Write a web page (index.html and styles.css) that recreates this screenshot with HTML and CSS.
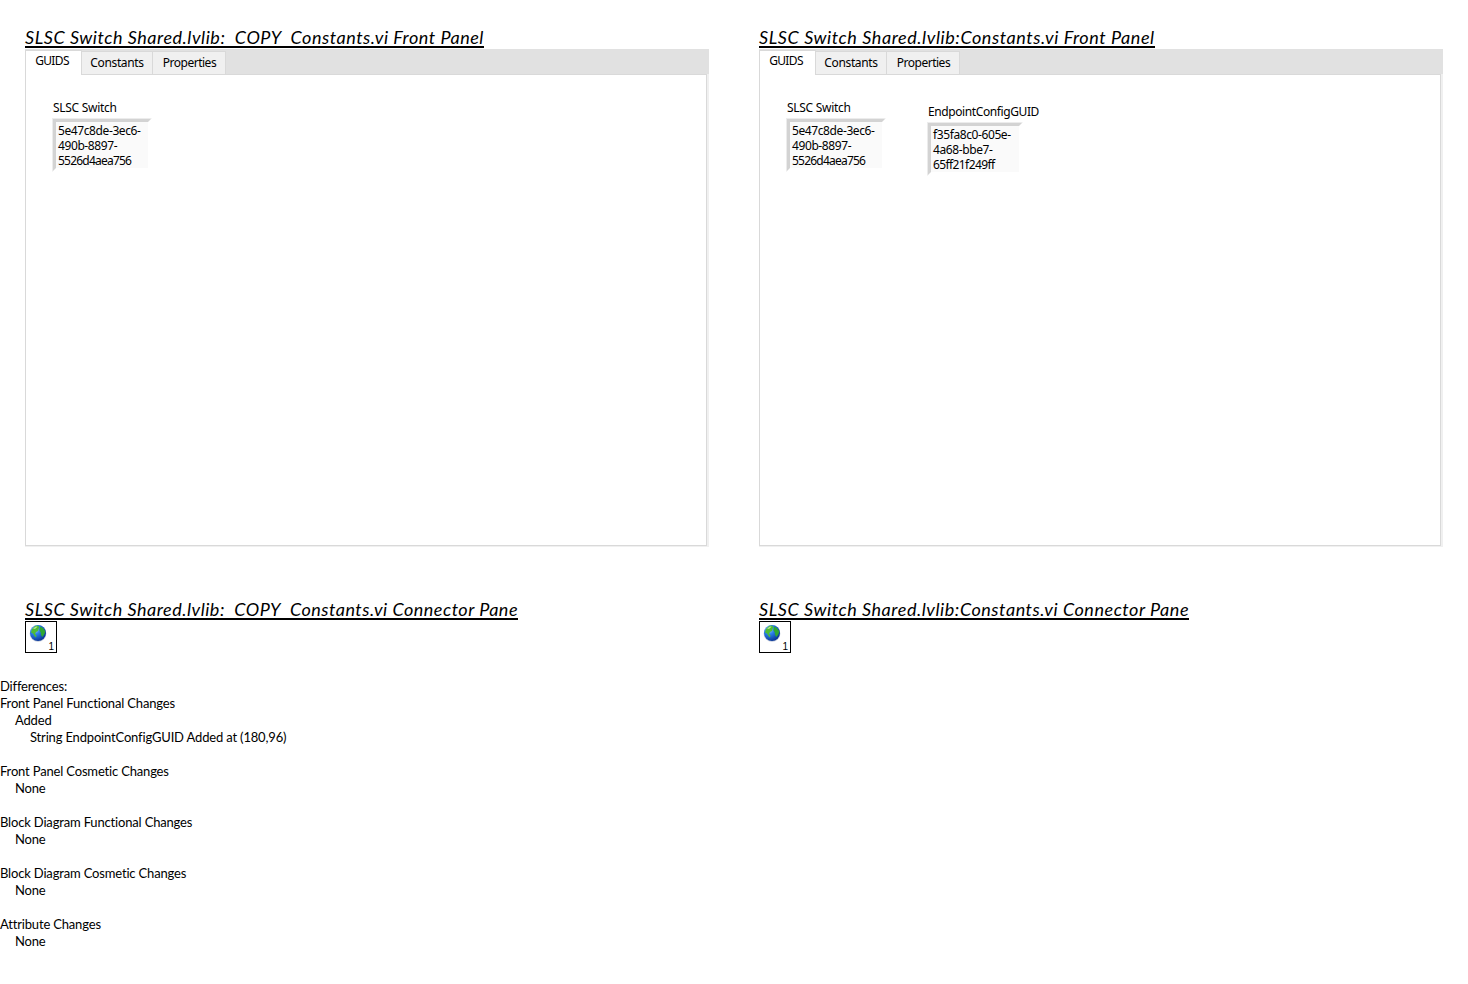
FILE: index.html
```
<!DOCTYPE html>
<html lang="en">
<head>
<meta charset="utf-8">
<title>VI Comparison Report</title>
<link rel="stylesheet" href="styles.css">
</head>
<body>
<svg class="defs" width="0" height="0">
  <defs>
    <radialGradient id="sea" cx="32%" cy="28%" r="75%">
      <stop offset="0" stop-color="#a5d2fa"/><stop offset=".4" stop-color="#2a80ea"/><stop offset="1" stop-color="#0a3596"/>
    </radialGradient>
    <symbol id="globe" viewBox="0 0 18 18">
      <circle cx="9" cy="9.6" r="8.4" fill="#abb7cb" opacity=".6"/>
      <circle cx="9" cy="9" r="8" fill="url(#sea)"/>
      <path d="M3 5 L6 2 L9 1.5 L10.5 3 L9.5 5 L9 7 L7 8 L6 10 L7.5 11.5 L7 13.5 L5.5 12 L4 9.5 L2 8.5Z" fill="#4fbc35"/>
      <path d="M11 2.5 L14 4 L16.3 7.5 L15.5 10 L13.5 13 L12 11 L11.8 8.5 L10.5 6.5Z" fill="#2ea832"/>
      <path d="M4 4.5 L7 2.5 L8.5 2.8 L6 5Z" fill="#b5e994"/>
    </symbol>
  </defs>
</svg>
<main class="report">
  <div class="columns">
    <section class="column">
      <h2 class="title title-a">SLSC Switch Shared.lvlib:&nbsp; COPY&nbsp; Constants.vi Front Panel</h2>
      <div class="panel">
        <div class="tabs"><span class="tab active">GUIDS</span><span class="tab constants">Constants</span><span class="tab properties">Properties</span></div>
        <div class="page">
          <div class="field"><span class="label">SLSC Switch</span><div class="frame"><div class="value">5e47c8de-3ec6-<br>490b-8897-<br><span class="tail">5526d4aea756</span></div></div></div>
        </div>
      </div>
      <h2 class="title title-b">SLSC Switch Shared.lvlib:&nbsp; COPY&nbsp; Constants.vi Connector Pane</h2>
      <div class="connector"><svg class="globe"><use href="#globe"/></svg><span class="index">1</span></div>
    </section>
    <section class="column">
      <h2 class="title title-c">SLSC Switch Shared.lvlib:Constants.vi Front Panel</h2>
      <div class="panel">
        <div class="tabs"><span class="tab active">GUIDS</span><span class="tab constants">Constants</span><span class="tab properties">Properties</span></div>
        <div class="page">
          <div class="field"><span class="label">SLSC Switch</span><div class="frame"><div class="value">5e47c8de-3ec6-<br>490b-8897-<br><span class="tail">5526d4aea756</span></div></div></div>
          <div class="field endpoint"><span class="label">EndpointConfigGUID</span><div class="frame"><div class="value">f35fa8c0-605e-<br>4a68-bbe7-<br><span class="tail">65ff21f249ff</span></div></div></div>
        </div>
      </div>
      <h2 class="title title-d">SLSC Switch Shared.lvlib:Constants.vi Connector Pane</h2>
      <div class="connector"><svg class="globe"><use href="#globe"/></svg><span class="index">1</span></div>
    </section>
  </div>
  <section class="differences">
    <p>Differences:</p>
    <div class="group"><p>Front Panel Functional Changes</p><p class="in1">Added</p><p class="in2">String EndpointConfigGUID Added at (180,96)</p></div>
    <div class="group"><p>Front Panel Cosmetic Changes</p><p class="in1">None</p></div>
    <div class="group"><p>Block Diagram Functional Changes</p><p class="in1">None</p></div>
    <div class="group"><p>Block Diagram Cosmetic Changes</p><p class="in1">None</p></div>
    <div class="group"><p>Attribute Changes</p><p class="in1">None</p></div>
  </section>
</main>
</body>
</html>
```
FILE: styles.css
```
* { box-sizing: border-box; }
body { margin: 0; background: #fff; color: #000; }
.defs { display: block; height: 0; }
.report { height: 984px; overflow: hidden; padding-top: 27px; }
.columns { display: grid; grid-template-columns: 684px 684px; column-gap: 50px; padding-left: 25px; height: 651px; }
.column { display: flex; flex-direction: column; align-items: flex-start; }
.title { margin: 0; height: 21px; font: italic 400 18px/21px Lato, sans-serif; letter-spacing: .57px; white-space: nowrap; border-bottom: 2px solid #000; }
.title-a { width: 459px; letter-spacing: .53px; }
.title-b { width: 493px; letter-spacing: .51px; }
.title-c { width: 396px; }
.title-d { width: 430px; letter-spacing: .55px; }
.panel { width: 684px; height: 498px; margin: 1px 0 52px; font: 12px/15px "Noto Sans", sans-serif; background: #f0f0f0; }
.tabs { display: flex; align-items: flex-end; height: 25px; background: #e1e1e1; }
.tab { height: 24px; margin-bottom: -1px; border: 1px solid #d9d9d9; border-left: 0; background: #f0f0f0; text-align: center; padding-top: 3px; letter-spacing: -.35px; }
.tab.active { position: relative; width: 57px; height: 25px; background: #fff; border-left: 1px solid #d9d9d9; border-bottom: 0; padding: 2px 3px 0 0; letter-spacing: -.65px; }
.constants { width: 71px; }
.tab.properties { width: 73px; letter-spacing: -.5px; padding-left: 1px; }
.page { display: flex; height: 472px; width: 682px; padding: 25px 0 0 26px; background: #fff; border: 1px solid #d9d9d9; }
.field { width: 141px; }
.endpoint { padding-top: 4px; }
.label { display: block; height: 18px; padding-left: 1px; white-space: nowrap; letter-spacing: -.28px; }
.endpoint .label { letter-spacing: -.4px; }
.frame { width: 100px; height: 54px; border: 1px solid #ececec; border-right-color: #fff; border-bottom-color: #fff; }
.endpoint .frame { width: 96px; }
.value { height: 52px; border: 3px solid #d3d3d3; border-right-color: #fff; border-bottom-color: #fff; background: #fafafa; padding: 1px 0 0 2px; white-space: nowrap; letter-spacing: -.4px; }
.tail { letter-spacing: -.78px; }
.endpoint .tail { letter-spacing: -.6px; }
.connector { display: flex; position: relative; width: 32px; height: 32px; margin-top: 1px; border: 1px solid #000; }
.globe { width: 18px; height: 18px; margin: 2px 0 0 3px; }
.index { position: absolute; right: 2px; bottom: 1px; font: 10px/9px "Liberation Sans", sans-serif; }
.differences { font: 13px/17px Lato, sans-serif; letter-spacing: -.17px; white-space: nowrap; }
.differences p { margin: 0; }
.group { margin-bottom: 17px; }
.in1 { padding-left: 15px; }
.in2 { padding-left: 30px; }
```
